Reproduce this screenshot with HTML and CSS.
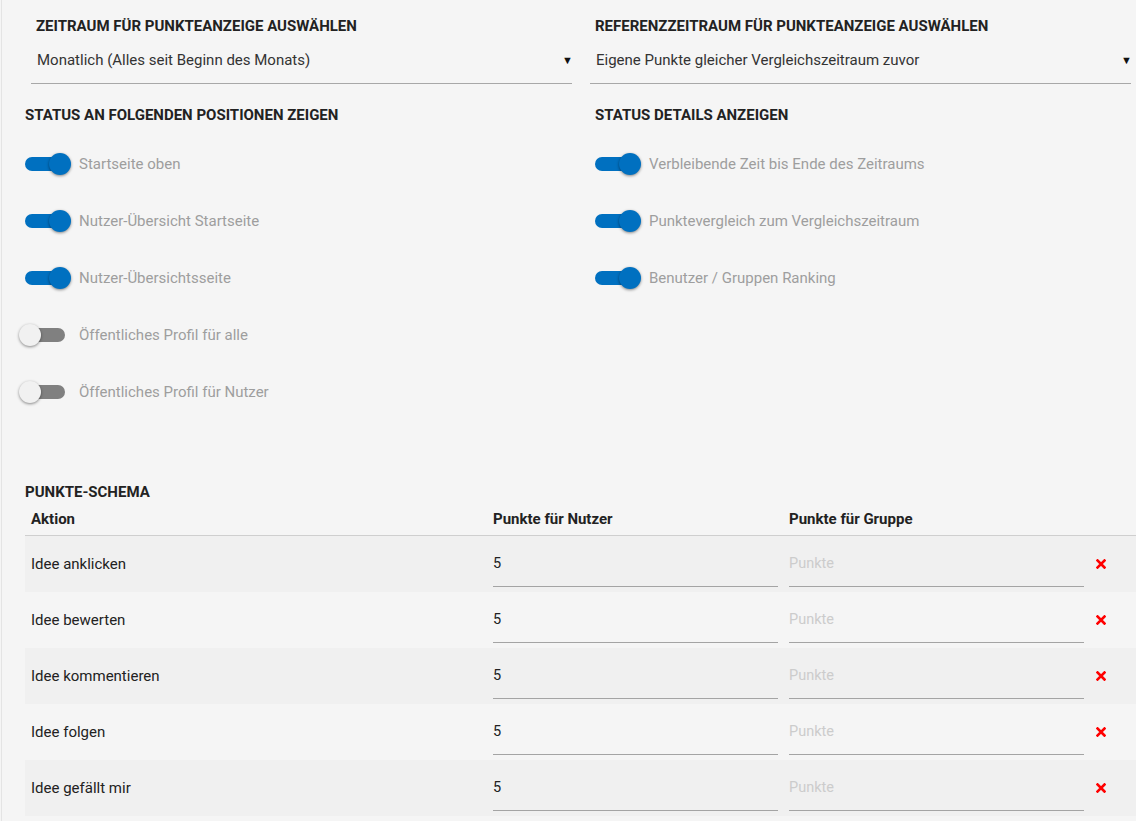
FILE: index.html
```html
<!DOCTYPE html>
<html>
<head>
    <meta charset="UTF-8">
    <title>Punkte Einstellungen</title>
    <link rel="stylesheet" href="styles.css">
</head>
<body>
    <div class="page">
        <div class="selects">
            <div class="field">
                <h3 class="field-title">Zeitraum für Punkteanzeige auswählen</h3>
                <div class="select">
                    <span>Monatlich (Alles seit Beginn des Monats)</span>
                    <span class="arrow">&#9660;</span>
                </div>
            </div>
            <div class="field">
                <h3 class="field-title">Referenzzeitraum für Punkteanzeige auswählen</h3>
                <div class="select">
                    <span>Eigene Punkte gleicher Vergleichszeitraum zuvor</span>
                    <span class="arrow">&#9660;</span>
                </div>
            </div>
        </div>

        <div class="status">
            <div class="status-col">
                <h3 class="section-title">Status an folgenden Positionen zeigen</h3>
                <div class="toggle-row"><span class="toggle on"></span><span class="toggle-label">Startseite oben</span></div>
                <div class="toggle-row"><span class="toggle on"></span><span class="toggle-label">Nutzer-Übersicht Startseite</span></div>
                <div class="toggle-row"><span class="toggle on"></span><span class="toggle-label">Nutzer-Übersichtsseite</span></div>
                <div class="toggle-row"><span class="toggle"></span><span class="toggle-label">Öffentliches Profil für alle</span></div>
                <div class="toggle-row"><span class="toggle"></span><span class="toggle-label">Öffentliches Profil für Nutzer</span></div>
            </div>
            <div class="status-col">
                <h3 class="section-title">Status Details anzeigen</h3>
                <div class="toggle-row"><span class="toggle on"></span><span class="toggle-label">Verbleibende Zeit bis Ende des Zeitraums</span></div>
                <div class="toggle-row"><span class="toggle on"></span><span class="toggle-label">Punktevergleich zum Vergleichszeitraum</span></div>
                <div class="toggle-row"><span class="toggle on"></span><span class="toggle-label">Benutzer / Gruppen Ranking</span></div>
            </div>
        </div>

        <div class="schema">
            <h3 class="section-title">Punkte-Schema</h3>
            <table class="schema-table">
                <thead>
                    <tr>
                        <th class="col-action">Aktion</th>
                        <th class="col-user">Punkte für Nutzer</th>
                        <th class="col-group">Punkte für Gruppe</th>
                        <th class="col-del"></th>
                    </tr>
                </thead>
                <tbody>
                    <tr>
                        <td>Idee anklicken</td>
                        <td><input type="text" class="points" value="5"></td>
                        <td><input type="text" class="points" placeholder="Punkte"></td>
                        <td class="del"><svg viewBox="0 0 10 10" width="10" height="10"><path d="M1.5 1.5L8.5 8.5M8.5 1.5L1.5 8.5" stroke="#ff0000" stroke-width="2.6" stroke-linecap="square"/></svg></td>
                    </tr>
                    <tr>
                        <td>Idee bewerten</td>
                        <td><input type="text" class="points" value="5"></td>
                        <td><input type="text" class="points" placeholder="Punkte"></td>
                        <td class="del"><svg viewBox="0 0 10 10" width="10" height="10"><path d="M1.5 1.5L8.5 8.5M8.5 1.5L1.5 8.5" stroke="#ff0000" stroke-width="2.6" stroke-linecap="square"/></svg></td>
                    </tr>
                    <tr>
                        <td>Idee kommentieren</td>
                        <td><input type="text" class="points" value="5"></td>
                        <td><input type="text" class="points" placeholder="Punkte"></td>
                        <td class="del"><svg viewBox="0 0 10 10" width="10" height="10"><path d="M1.5 1.5L8.5 8.5M8.5 1.5L1.5 8.5" stroke="#ff0000" stroke-width="2.6" stroke-linecap="square"/></svg></td>
                    </tr>
                    <tr>
                        <td>Idee folgen</td>
                        <td><input type="text" class="points" value="5"></td>
                        <td><input type="text" class="points" placeholder="Punkte"></td>
                        <td class="del"><svg viewBox="0 0 10 10" width="10" height="10"><path d="M1.5 1.5L8.5 8.5M8.5 1.5L1.5 8.5" stroke="#ff0000" stroke-width="2.6" stroke-linecap="square"/></svg></td>
                    </tr>
                    <tr>
                        <td>Idee gefällt mir</td>
                        <td><input type="text" class="points" value="5"></td>
                        <td><input type="text" class="points" placeholder="Punkte"></td>
                        <td class="del"><svg viewBox="0 0 10 10" width="10" height="10"><path d="M1.5 1.5L8.5 8.5M8.5 1.5L1.5 8.5" stroke="#ff0000" stroke-width="2.6" stroke-linecap="square"/></svg></td>
                    </tr>
                </tbody>
            </table>
        </div>
    </div>
</body>
</html>
```

FILE: styles.css
```css
html, body {
    margin: 0;
    padding: 0;
    background-color: #f5f5f5;
}

body {
    font-family: Roboto, "Liberation Sans", sans-serif;
    color: #333333;
    overflow: hidden;
}

.page {
    margin-left: 1px;
    border-left: 1px solid #e4e4e4;
    padding: 18px 0 0 23px;
    min-height: 821px;
    box-sizing: border-box;
}

h3 {
    margin: 0;
    font-size: 15px;
    line-height: 16px;
    font-weight: 700;
    text-transform: uppercase;
    color: #222222;
}

/* select fields */
.selects {
    display: grid;
    grid-template-columns: 541px 541px;
    column-gap: 18px;
    padding-left: 6px;
}

.field-title {
    padding-left: 5px;
}

.select {
    display: flex;
    justify-content: space-between;
    align-items: center;
    margin-top: 16px;
    padding: 0 0 13px 6px;
    height: 20px;
    font-size: 15px;
    color: #333333;
    border-bottom: 1px solid #a8a8a8;
}

.select .arrow {
    font-size: 11px;
    margin-right: -1px;
    color: #111111;
}

/* toggles */
.status {
    display: grid;
    grid-template-columns: 570px 1fr;
    margin-top: 23px;
}

.status .section-title {
    margin-bottom: 12px;
}

.toggle-row {
    display: flex;
    align-items: center;
    height: 57px;
}

.toggle {
    position: relative;
    display: inline-block;
    width: 40px;
    height: 14px;
    border-radius: 7px;
    background-color: #808080;
}

.toggle::after {
    content: "";
    position: absolute;
    top: -4px;
    left: -6px;
    width: 22px;
    height: 22px;
    border-radius: 50%;
    background-color: #f1f1f1;
    box-shadow: 0 1px 3px rgba(0, 0, 0, 0.45);
}

.toggle.on {
    background-color: #0070c0;
}

.toggle.on::after {
    left: 24px;
    background-color: #0070c0;
}

.toggle-label {
    margin-left: 14px;
    font-size: 15px;
    color: #9e9e9e;
}

/* points schema */
.schema {
    margin-top: 64px;
}

.schema-table {
    border-collapse: collapse;
    width: 1111px;
    table-layout: fixed;
}

.schema-table th {
    box-sizing: border-box;
    text-align: left;
    font-size: 15px;
    line-height: 16px;
    font-weight: 700;
    color: #222222;
    padding: 11px 6px 8px 6px;
    border-bottom: 1px solid #cfcfcf;
}

.schema-table th.col-user,
.schema-table th.col-group {
    padding-left: 5px;
}

.col-action { width: 463px; }
.col-user { width: 296px; }
.col-group { width: 306px; }
.col-del { width: 46px; }

.schema-table td {
    padding: 4px 6px 5px 5px;
    font-size: 15px;
    color: #222222;
}

.schema-table td:first-child {
    padding-left: 6px;
}

.schema-table tbody tr:nth-child(odd) {
    background-color: #f0f0f0;
}

input.points {
    display: block;
    box-sizing: border-box;
    width: 100%;
    height: 47px;
    padding: 0;
    border: none;
    border-bottom: 1px solid #a4a4a4;
    background: transparent;
    outline: none;
    font-family: Roboto, "Liberation Sans", sans-serif;
    font-size: 14.5px;
    color: #222222;
}

input.points::placeholder {
    color: #cccccc;
}

td.del {
    padding-left: 6px;
    line-height: 0;
}
```
